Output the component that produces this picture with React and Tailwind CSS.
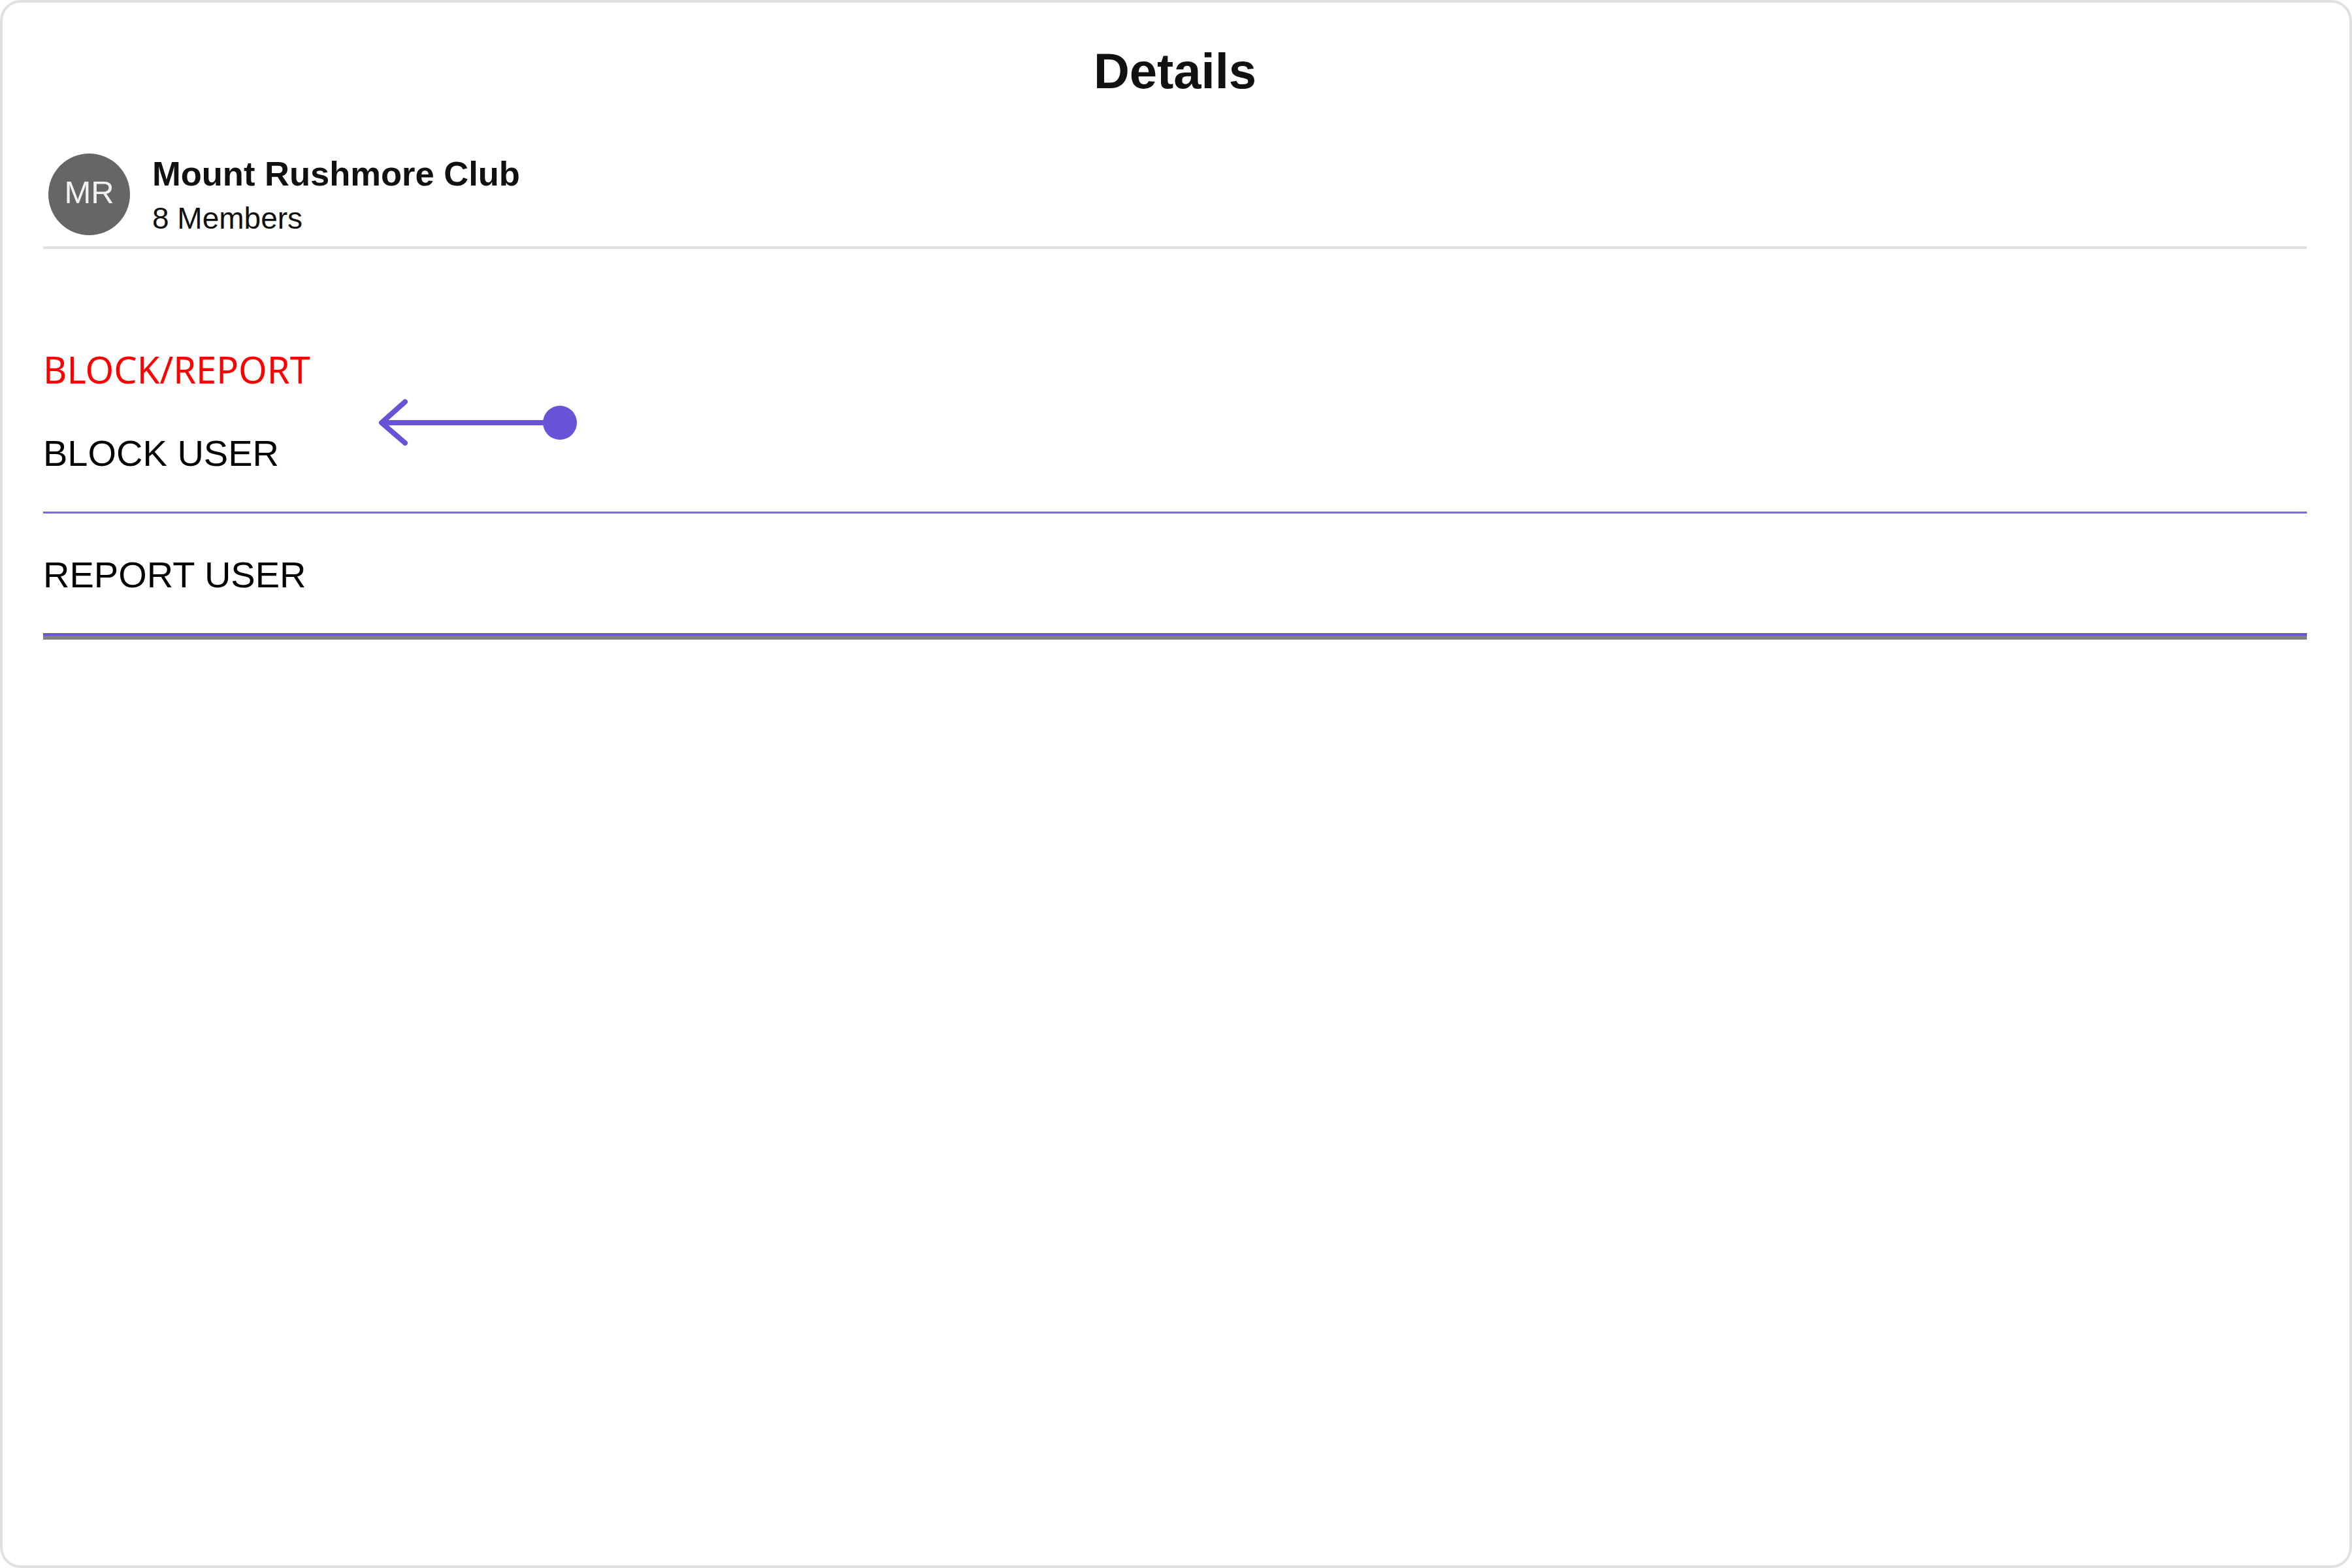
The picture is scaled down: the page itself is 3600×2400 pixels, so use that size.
import React from 'react';

const sans = { fontFamily: '"Liberation Sans", Arial, sans-serif' };
const noto = { fontFamily: '"Noto Sans", "Open Sans", sans-serif' };

// purple pointer drawn over the block row (annotation)
const PointerArrow = () => (
  <svg
    className="absolute left-[571px] top-[596px]"
    width="320"
    height="95"
    viewBox="0 0 320 95"
    fill="none"
  >
    <path d="M282 47 H10" stroke="#6a52d6" strokeWidth="8" strokeLinecap="round" />
    <path d="M45 15 L9 47 L45 78" stroke="#6a52d6" strokeWidth="8" strokeLinecap="round" strokeLinejoin="round" />
    <circle cx="282" cy="47" r="26" fill="#6a52d6" />
  </svg>
);

const Row = ({ label, className }) => (
  <div className={className}>
    <div className="text-[56px] leading-[55px] text-black" style={sans}>
      {label}
    </div>
  </div>
);

export default function App() {
  return (
    <div className="h-[2400px] w-[3600px] bg-white">
      <div
        className="relative box-border h-full w-full rounded-[32px] border-4 border-[#e0e0e0] bg-white pl-[62px] pr-[65px] pt-[62px]"
        style={sans}
      >
        <h1 className="text-center text-[76px] font-bold leading-[86px] text-[#111]">Details</h1>

        {/* group header */}
        <div className="mt-[83px] flex items-center pl-[8px]">
          <div className="flex h-[125px] w-[125px] shrink-0 items-center justify-center rounded-full bg-[#666666] pb-[7px] text-[49px] leading-none text-[#f2f2f2]">
            MR
          </div>
          <div className="ml-[34px] flex flex-col text-[#111]">
            <div className="text-[52.5px] font-bold leading-[60px]">Mount Rushmore Club</div>
            <div className="mt-[13px] text-[46px] leading-[51px]">8 Members</div>
          </div>
        </div>
        <div className="mt-[17px] h-[4px] bg-[#e0e0e0]" />

        {/* block / report section */}
        <div className="mt-[157px] text-[56px] leading-[55px] text-[#ff0000]" style={noto}>
          BLOCK/REPORT
        </div>
        <Row label="BLOCK USER" className="pt-[73px] pb-[62px]" />
        <div className="h-[3px] bg-[#766adb]" />
        <Row label="REPORT USER" className="pt-[66px] pb-[62px]" />
        <div className="h-[4px] bg-[#6a52d6]" />
        <div className="h-[6px] bg-[#808080]" />

        <PointerArrow />
      </div>
    </div>
  );
}
